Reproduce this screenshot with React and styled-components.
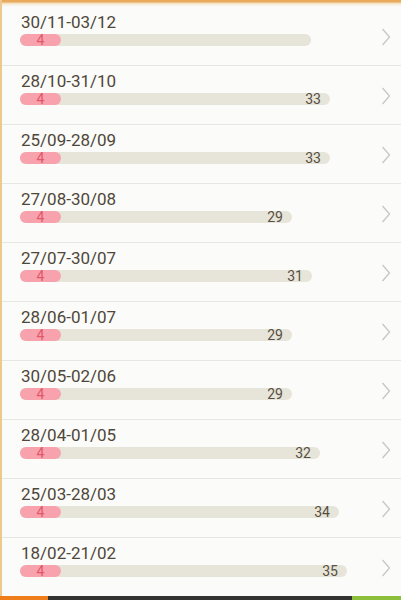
import styled, { createGlobalStyle } from "styled-components";

const GlobalStyle = createGlobalStyle`
  html, body {
    margin: 0;
    padding: 0;
    height: 100%;
    overflow: hidden;
    background: #fbfbfa;
  }
  body {
    font-family: Roboto, "Noto Sans", sans-serif;
  }
`;

const rows = [
  { range: "30/11-03/12", low: 4, total: null, width: 291 },
  { range: "28/10-31/10", low: 4, total: 33, width: 310 },
  { range: "25/09-28/09", low: 4, total: 33, width: 310 },
  { range: "27/08-30/08", low: 4, total: 29, width: 272 },
  { range: "27/07-30/07", low: 4, total: 31, width: 292 },
  { range: "28/06-01/07", low: 4, total: 29, width: 272 },
  { range: "30/05-02/06", low: 4, total: 29, width: 272 },
  { range: "28/04-01/05", low: 4, total: 32, width: 300 },
  { range: "25/03-28/03", low: 4, total: 34, width: 319 },
  { range: "18/02-21/02", low: 4, total: 35, width: 327 },
];

const Screen = styled.div`
  display: flex;
  flex-direction: column;
  height: 600px;
  width: 401px;
`;

const Body = styled.div`
  flex: 1;
  display: flex;
  flex-direction: column;
  border-left: 2px solid #ebc98f;
  overflow: hidden;
`;

const TopEdge = styled.div`
  height: 7px;
  flex-shrink: 0;
  background: linear-gradient(
    to bottom,
    #e8aa5c 0px,
    #e8aa5c 2px,
    #f3dcb8 3px,
    #faf3e6 5px,
    #fbfbfa 7px
  );
`;

const List = styled.div`
  display: flex;
  flex-direction: column;
`;

const Row = styled.div`
  display: flex;
  align-items: center;
  height: 58px;
  flex-shrink: 0;
  border-bottom: 1px solid #e6e6e3;
  padding: 0 10px 0 18px;
`;

const Info = styled.div`
  flex: 1;
  display: flex;
  flex-direction: column;
  padding-bottom: 14px;
`;

const Range = styled.div`
  font-size: 17px;
  line-height: 20px;
  color: #4f4739;
  margin-left: 1px;
`;

const Track = styled.div`
  margin-top: 2px;
  height: 12px;
  width: ${(p) => p.$width}px;
  border-radius: 6px;
  background: #e7e5d9;
  display: flex;
  align-items: center;
`;

const Fill = styled.div`
  width: 41px;
  height: 12px;
  border-radius: 6px;
  background: #f7a2ad;
  color: #e2586a;
  font-size: 14px;
  line-height: 12px;
  text-align: center;
`;

const Total = styled.span`
  margin-left: auto;
  margin-right: 9px;
  font-size: 14px;
  line-height: 12px;
  color: #574f42;
`;

const Chevron = styled.svg`
  width: 10px;
  height: 18px;
  flex-shrink: 0;
  margin-top: 1px;
`;

const BottomBar = styled.div`
  height: 4px;
  flex-shrink: 0;
  display: grid;
  grid-template-columns: 48px 1fr 49px;
`;

const Segment = styled.div`
  background: ${(p) => p.$color};
`;

export default function App() {
  return (
    <>
      <GlobalStyle />
      <Screen>
        <Body>
          <TopEdge />
          <List>
            {rows.map((r) => (
              <Row key={r.range}>
                <Info>
                  <Range>{r.range}</Range>
                  <Track $width={r.width}>
                    <Fill>{r.low}</Fill>
                    {r.total !== null && <Total>{r.total}</Total>}
                  </Track>
                </Info>
                <Chevron viewBox="0 0 10 18">
                  <polyline
                    points="1.5,1 8.5,9 1.5,17"
                    fill="none"
                    stroke="#c6c6c4"
                    strokeWidth="1.3"
                  />
                </Chevron>
              </Row>
            ))}
          </List>
        </Body>
        <BottomBar>
          <Segment $color="#ef7d1a" />
          <Segment $color="#333331" />
          <Segment $color="#8cbf3a" />
        </BottomBar>
      </Screen>
    </>
  );
}
